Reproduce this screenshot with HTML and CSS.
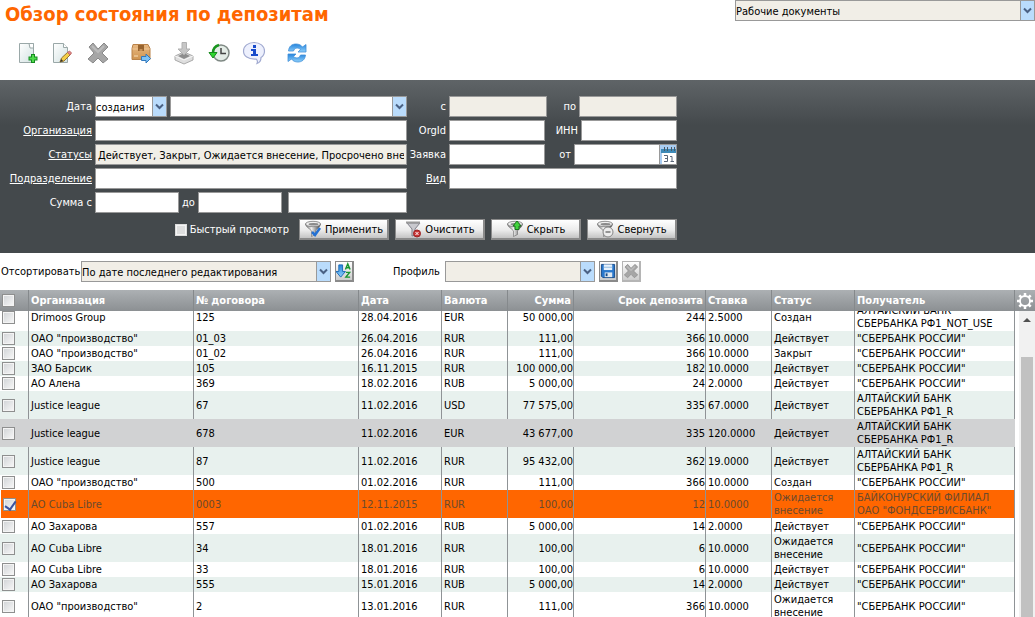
FILE: index.html
```
<!DOCTYPE html>
<html lang="ru">
<head>
<meta charset="utf-8">
<title>Обзор состояния по депозитам</title>
<link rel="stylesheet" href="styles.css">
</head>
<body>
<svg class="defs" aria-hidden="true">
  <defs>
    <linearGradient id="metal"><stop offset="0" stop-color="#777"/><stop offset=".4" stop-color="#eee"/><stop offset="1" stop-color="#3c3c3c"/></linearGradient>
    <linearGradient id="paper" x2="1" y2="1"><stop offset="0" stop-color="#fff"/><stop offset="1" stop-color="#d3e2e2"/></linearGradient>
    <linearGradient id="box" x2="0" y2="1"><stop offset="0" stop-color="#e8b983"/><stop offset="1" stop-color="#cf9450"/></linearGradient>
    <linearGradient id="sky" x2="0" y2="1"><stop offset="0" stop-color="#2584dd"/><stop offset="1" stop-color="#8ed0fa"/></linearGradient>
    <symbol id="chevron" viewBox="0 0 9 6"><path d="M1 1l3.500 3.500L8 1" fill="none" stroke="#4a6184" stroke-width="2"/></symbol>
    <symbol id="cross" viewBox="0 0 24 24"><path d="M3 6l4-4 5 6 6-6 4 4-6 6 6 6-5 4-5-5-5 5-5-4 6-6z" fill="#a6a6a6" stroke="#8a8a8a" stroke-linejoin="round"/><path d="M6 5l6 6 6-6" fill="none" stroke="#bcbcbc" stroke-width="2"/></symbol>
    <symbol id="funnel" viewBox="0 0 18 18"><path d="M1.500 4c0 3 5 5 6 7v5.500l4-2V11c1-2 5-4 5-7z" fill="url(#metal)" stroke="#666" stroke-width=".6"/><ellipse cx="9" cy="4" rx="7.500" ry="2.700" fill="#eee" stroke="#777" stroke-width=".8"/><ellipse cx="9.500" cy="4.300" rx="5" ry="1.300" fill="#8a8a8a"/></symbol>
  </defs>
</svg>

<header class="top">
  <h1>Обзор состояния по депозитам</h1>
  <span class="select shaded docs"><select aria-label="Документы"><option>Рабочие документы</option></select><svg><use href="#chevron"/></svg></span>
</header>

<nav class="toolbar" aria-label="Действия">
  <div class="group">
    <button aria-label="Создать"><svg viewBox="0 0 24 24"><path d="M3.500 2.500h14v19h-14z" fill="url(#paper)" stroke="#9aa8a8"/><path d="M13 2.500h4.500V7H14z" fill="#fff" stroke="#9aa8a8"/><path d="M17 13v9M12.500 17.500h9" stroke="#148b20" stroke-width="4"/><path d="M17 14v7M13.500 17.500h7" stroke="#4fdb4b" stroke-width="2"/></svg></button>
    <button aria-label="Изменить"><svg viewBox="0 0 24 24"><path d="M2.500 2.500h10l4 4v15h-14z" fill="url(#paper)" stroke="#9aa8a8"/><path d="M12.500 2.500v4h4" fill="#fff" stroke="#9aa8a8"/><path d="M9 21l1.500-4L17 11l2.500 2.500L13 20z" fill="#f4cf47" stroke="#96742d"/><path d="M16.500 11.500l2-1.500 2 2-1.500 2z" fill="#e08a86" stroke="#c06a6a"/><path d="M9 21l1.500-3 1.500 2z" fill="#333"/></svg></button>
    <button aria-label="Удалить"><svg><use href="#cross"/></svg></button>
  </div>
  <div class="group">
    <button aria-label="Отправить"><svg viewBox="0 0 24 24"><path d="M4 3.500h15l2 4v11H3v-11z" fill="url(#box)" stroke="#b98249"/><path d="M3.500 8h17" stroke="#f0c796"/><path d="M9 4h6v6H9z" fill="#98642f"/><path d="M10.500 10V8h3v2" fill="#c99359"/><path d="M5 15h4" stroke="#fae1bb"/><path d="M12.500 15.500H17V13l4.500 4.500L17 22v-2.500h-4.500z" fill="#7fc2f4" stroke="#3179be"/></svg></button>
  </div>
  <div class="group">
    <button aria-label="Импорт"><svg viewBox="0 0 24 24"><path d="M3 15l9-4 9 4v4l-9 4-9-4z" fill="#dedede" stroke="#aaa"/><path d="M3 15l9 4 9-4" fill="none" stroke="#f6f6f6"/><path d="M6 15l6-3 6 3-6 3z" fill="#8d8d8d"/><path d="M10 1.500h4.500V8H18l-6 6-6-6h4z" fill="#c6c6c6" stroke="#b0b0b0"/></svg></button>
    <button aria-label="История"><svg viewBox="0 0 24 24"><circle cx="14" cy="12" r="8" fill="#e3ece6" stroke="#7f8984" stroke-width="1.500"/><path d="M14 7v5.500h5" fill="none" stroke="#444" stroke-width="1.500"/><path d="M12 4C8 5 6 7 6 12" fill="none" stroke="#18951e" stroke-width="2.500"/><path d="M2 11.500h8L6 17z" fill="#2ed52e" stroke="#178a1c"/></svg></button>
    <button aria-label="Информация"><svg viewBox="0 0 24 24"><path d="M12 1.500c6 0 10.500 3.500 10.500 8.500 0 3-1 5-3.500 6.500 0 3-1 5-4 6 1-2 0-4-1-4.500C6 18.500 1.500 15 1.500 10S6 1.500 12 1.500z" fill="#edf0fd" stroke="#a0a9d0" stroke-width="1.200"/><path d="M11 4h3v3h-3zM9 8h5v5h2v2H9v-2h2v-3H9z" fill="#174acb"/></svg></button>
  </div>
  <div class="group">
    <button aria-label="Обновить"><svg viewBox="0 0 24 24"><path d="M3.500 10C4 5 7 3 11 3c3 0 5 1 6.500 3L21 3.500V11h-8l2.500-2.500c-3-2.500-6-1.500-7 1.500z" fill="url(#sky)" stroke="#4391d8" stroke-width=".8"/><path d="M20.500 14c-.5 5-4 7-7.500 7-3 0-5-1-6.500-3L3 20.500V13h8l-2.500 2.500c3 2.500 6 1.500 7-1.500z" fill="url(#sky)" stroke="#4391d8" stroke-width=".8"/></svg></button>
  </div>
</nav>

<form class="filter" onsubmit="return false">
  <div class="filter-body">
  <div class="fields">
    <label for="kind">Дата</label>
    <div class="line">
      <span class="select kind"><select id="kind"><option>создания</option></select><svg><use href="#chevron"/></svg></span>
      <span class="select grow"><select aria-label="Период"><option></option></select><svg><use href="#chevron"/></svg></span>
    </div>
    <label for="from">с</label>
    <div class="line spread"><input id="from" class="date" disabled><span class="pair"><label for="to">по</label><input id="to" class="date" disabled></span></div>

    <label for="org" class="link">Организация</label>
    <input id="org">
    <label for="orgid">OrgId</label>
    <div class="line spread"><input id="orgid" class="code"><span class="pair"><label for="inn">ИНН</label><input id="inn" class="code"></span></div>

    <label for="status" class="link">Статусы</label>
    <input id="status" class="shaded" readonly value="Действует, Закрыт, Ожидается внесение, Просрочено внесение">
    <label for="req">Заявка</label>
    <div class="line spread"><input id="req" class="code"><span class="pair"><label for="reqdate">от</label><span class="line picker"><input id="reqdate"><button type="button" aria-label="Календарь"><svg viewBox="0 0 16 19"><path d="M1 4h15v4H1z" fill="#3d8ab8"/><path d="M4.500 2v4M7.500 2v4M11.500 2v4M14.500 2v4" stroke="#4b5964"/><path d="M2 8h14v11H2z" fill="#fff"/><path d="M4 10.500h3.500v6H4M5 13.500h2.500M10 11.500h2v5M10.500 16.500h3.500" fill="none" stroke="#5b6779"/></svg></button></span></span></div>

    <label for="unit" class="link">Подразделение</label>
    <input id="unit">
    <label for="type" class="link">Вид</label>
    <input id="type">

    <label for="sum1">Сумма с</label>
    <div class="line"><input id="sum1" class="sum"><label for="sum2">до</label><input id="sum2" class="sum"><input class="grow currency" aria-label="Валюта"></div>
  </div>
  <div class="actions">
    <label class="quick"><input type="checkbox">Быстрый просмотр</label>
    <button type="button" class="btn"><svg viewBox="0 0 18 18"><use href="#funnel"/><path d="M8 12l3 3 5-7" fill="none" stroke="#2371d4" stroke-width="2.500"/></svg>Применить</button>
    <button type="button" class="btn"><svg viewBox="0 0 18 18"><path d="M3 3l5 6v7l3-1V9l5-6z" fill="#c9c9ce" stroke="#81818b"/><path d="M2 2.500h14" stroke="#999" stroke-width="2"/><circle cx="13" cy="13.500" r="3.500" fill="#c93535" stroke="#9b2323"/><path d="M11.500 12l3 3m0-3l-3 3" stroke="#fff"/></svg>Очистить</button>
    <button type="button" class="btn"><svg viewBox="0 0 18 18"><use href="#funnel"/><path d="M9 9.500V6H7l4-5 4 5h-2v3.500z" fill="#42d33d" stroke="#17731b"/></svg>Скрыть</button>
    <button type="button" class="btn"><svg viewBox="0 0 18 18"><use href="#funnel"/><circle cx="12" cy="12" r="5" fill="#ececec" stroke="#858585"/><path d="M9.500 12h5" stroke="#777" stroke-width="1.500"/></svg>Свернуть</button>
  </div>
  </div>
</form>

<div class="sorting">
  <label for="sort" class="sort-label">Отсортировать</label>
  <span class="select shaded sort"><select id="sort"><option>По дате последнего редактирования</option></select><svg><use href="#chevron"/></svg></span>
  <button class="square" aria-label="Направление сортировки"><svg viewBox="0 0 17 19"><path d="M3 3h4v7h3l-5 6-5-6h3z" fill="url(#sky)" stroke="#1769b9"/><path d="M10 8l2.500-6L15 8M11 6h3M10.500 11h4l-4 5h4.500" fill="none" stroke="#16952f" stroke-width="1.500"/></svg></button>
  <label for="profile" class="profile-label">Профиль</label>
  <span class="select shaded profile"><select id="profile"><option></option></select><svg><use href="#chevron"/></svg></span>
  <button class="square" aria-label="Сохранить профиль"><svg viewBox="0 0 17 19"><path d="M1.500 2.500h14v14H3l-1.500-1.500z" fill="#2a78cc" stroke="#164b8a"/><path d="M4 2.500h9v6H4z" fill="#e8f2fc"/><path d="M4 5.500h9" stroke="#8eb9de"/><path d="M5 11h8v5H5z" fill="#e0e8f0"/><path d="M6 12h2v3H6z" fill="#174c89"/></svg></button>
  <button class="square muted" aria-label="Удалить профиль"><svg><use href="#cross"/></svg></button>
</div>

<main class="grid">
  <div class="grid-head">
    <table>
      <colgroup><col class="w-check"><col class="w-wide"><col class="w-wide"><col class="w-mid"><col class="w-small"><col class="w-small"><col class="w-term"><col class="w-small"><col class="w-mid"><col></colgroup>
      <thead><tr><th><input type="checkbox" aria-label="Выбрать все"></th><th>Организация</th><th>№ договора</th><th>Дата</th><th>Валюта</th><th class="num">Сумма</th><th class="num">Срок депозита</th><th>Ставка</th><th>Статус</th><th>Получатель</th></tr></thead>
    </table>
    <button class="gear" aria-label="Настройки"><svg viewBox="0 0 20 20"><g stroke="#fff" fill="none"><circle cx="10" cy="10" r="5" stroke-width="1.800"/><path d="M10 5V2M10 15v3M5 10H2M15 10h3M6.500 6.500L4.300 4.300M13.500 6.500l2.200-2.200M6.500 13.500l-2.200 2.200M13.500 13.500l2.200 2.200" stroke-width="2.500"/></g></svg></button>
  </div>
  <div class="grid-body">
    <div class="rows">
    <table aria-label="Депозиты">
      <colgroup><col class="w-check"><col class="w-wide"><col class="w-wide"><col class="w-mid"><col class="w-small"><col class="w-small"><col class="w-term"><col class="w-small"><col class="w-mid"><col></colgroup>
      <tbody>
        <tr><td><input type="checkbox" aria-label="125"></td><td>Drimoos Group</td><td>125</td><td>28.04.2016</td><td>EUR</td><td class="num">50 000,00</td><td class="num">244</td><td>2.5000</td><td>Создан</td><td>АЛТАЙСКИЙ БАНК<br>СБЕРБАНКА РФ1_NOT_USE</td></tr>
        <tr><td><input type="checkbox" aria-label="01_03"></td><td>ОАО "производство"</td><td>01_03</td><td>26.04.2016</td><td>RUR</td><td class="num">111,00</td><td class="num">366</td><td>10.0000</td><td>Действует</td><td>"СБЕРБАНК РОССИИ"</td></tr>
        <tr><td><input type="checkbox" aria-label="01_02"></td><td>ОАО "производство"</td><td>01_02</td><td>26.04.2016</td><td>RUR</td><td class="num">111,00</td><td class="num">366</td><td>10.0000</td><td>Закрыт</td><td>"СБЕРБАНК РОССИИ"</td></tr>
        <tr><td><input type="checkbox" aria-label="105"></td><td>ЗАО Барсик</td><td>105</td><td>16.11.2015</td><td>RUR</td><td class="num">100 000,00</td><td class="num">182</td><td>10.0000</td><td>Действует</td><td>"СБЕРБАНК РОССИИ"</td></tr>
        <tr><td><input type="checkbox" aria-label="369"></td><td>АО Алена</td><td>369</td><td>18.02.2016</td><td>RUB</td><td class="num">5 000,00</td><td class="num">24</td><td>2.0000</td><td>Действует</td><td>"СБЕРБАНК РОССИИ"</td></tr>
        <tr><td><input type="checkbox" aria-label="67"></td><td>Justice league</td><td>67</td><td>11.02.2016</td><td>USD</td><td class="num">77 575,00</td><td class="num">335</td><td>67.0000</td><td>Действует</td><td>АЛТАЙСКИЙ БАНК<br>СБЕРБАНКА РФ1_R</td></tr>
        <tr class="hovered"><td><input type="checkbox" aria-label="678"></td><td>Justice league</td><td>678</td><td>11.02.2016</td><td>EUR</td><td class="num">43 677,00</td><td class="num">335</td><td>120.0000</td><td>Действует</td><td>АЛТАЙСКИЙ БАНК<br>СБЕРБАНКА РФ1_R</td></tr>
        <tr><td><input type="checkbox" aria-label="87"></td><td>Justice league</td><td>87</td><td>11.02.2016</td><td>RUR</td><td class="num">95 432,00</td><td class="num">362</td><td>19.0000</td><td>Действует</td><td>АЛТАЙСКИЙ БАНК<br>СБЕРБАНКА РФ1_R</td></tr>
        <tr><td><input type="checkbox" aria-label="500"></td><td>ОАО "производство"</td><td>500</td><td>01.02.2016</td><td>RUR</td><td class="num">111,00</td><td class="num">366</td><td>10.0000</td><td>Создан</td><td>"СБЕРБАНК РОССИИ"</td></tr>
        <tr class="selected"><td><input type="checkbox" checked aria-label="0003"></td><td>АО Cuba Libre</td><td>0003</td><td>12.11.2015</td><td>RUR</td><td class="num">100,00</td><td class="num">12</td><td>10.0000</td><td>Ожидается<br>внесение</td><td>БАЙКОНУРСКИЙ ФИЛИАЛ<br>ОАО "ФОНДСЕРВИСБАНК"</td></tr>
        <tr><td><input type="checkbox" aria-label="557"></td><td>АО Захарова</td><td>557</td><td>01.02.2016</td><td>RUB</td><td class="num">5 000,00</td><td class="num">14</td><td>2.0000</td><td>Действует</td><td>"СБЕРБАНК РОССИИ"</td></tr>
        <tr><td><input type="checkbox" aria-label="34"></td><td>АО Cuba Libre</td><td>34</td><td>18.01.2016</td><td>RUR</td><td class="num">100,00</td><td class="num">6</td><td>10.0000</td><td>Ожидается<br>внесение</td><td>"СБЕРБАНК РОССИИ"</td></tr>
        <tr><td><input type="checkbox" aria-label="33"></td><td>АО Cuba Libre</td><td>33</td><td>18.01.2016</td><td>RUR</td><td class="num">100,00</td><td class="num">6</td><td>10.0000</td><td>Действует</td><td>"СБЕРБАНК РОССИИ"</td></tr>
        <tr><td><input type="checkbox" aria-label="555"></td><td>АО Захарова</td><td>555</td><td>15.01.2016</td><td>RUB</td><td class="num">5 000,00</td><td class="num">14</td><td>2.0000</td><td>Действует</td><td>"СБЕРБАНК РОССИИ"</td></tr>
        <tr><td><input type="checkbox" aria-label="2"></td><td>ОАО "производство"</td><td>2</td><td>13.01.2016</td><td>RUR</td><td class="num">111,00</td><td class="num">366</td><td>10.0000</td><td>Ожидается<br>внесение</td><td>"СБЕРБАНК РОССИИ"</td></tr>
      </tbody>
    </table>
    </div>
    <div class="scrollbar" aria-hidden="true"><svg viewBox="0 0 8 4"><path d="M0 4l4-4 4 4z" fill="#505050"/></svg><div class="thumb"></div></div>
  </div>
</main>
</body>
</html>
```
FILE: styles.css
```
* { box-sizing: border-box; }
body {
  margin: 0;
  height: 100vh;
  display: flex;
  flex-direction: column;
  overflow: hidden;
  background: #fff;
  color: #000;
  font: 11px/13px Tahoma, "DejaVu Sans Condensed", "Noto Sans", sans-serif;
}
button, input, select { font: inherit; color: inherit; margin: 0; border-radius: 0; }
button { padding: 0; border: 0; background: none; }
svg { display: block; }
.defs { position: absolute; width: 0; height: 0; }

/* Header */
.top { display: flex; justify-content: space-between; align-items: flex-start; height: 40px; padding-left: 5px; }
h1 { margin: 0; padding-top: 2px; font-size: 20px; line-height: 24px; color: #f60; white-space: nowrap; }
.docs { width: 300px; }

/* Text boxes and drop-downs */
input:not([type="checkbox"]) { display: block; width: 100%; min-width: 0; height: 21px; padding: 1px 2px 0; border: 1px solid #999; background: #fff; color: #000; }
input.shaded, input:disabled, .shaded select { background: #f1eee7 !important; }
.select { position: relative; display: block; }
.select select { display: block; width: 100%; height: 21px; padding: 1px 16px 0 0; border: 1px solid #999; background: #fff; color: #000; appearance: none; }
.select svg { position: absolute; top: 1px; right: 1px; width: 14px; height: 19px; padding: 6px 2px; border-left: 1px solid #999; background: #badcfc; pointer-events: none; }

/* Toolbar */
.toolbar { display: flex; gap: 19px; padding: 1px 16px 15px; }
.group { display: flex; gap: 11px; }
.toolbar button, .toolbar svg { width: 24px; height: 24px; }

/* Filter */
.filter { height: 173px; flex: none; padding-top: 16px; background: linear-gradient(#5f6467, #44494c 45px); color: #fff; }
.filter-body { width: max-content; }
.fields { display: grid; grid-template-columns: 92px 312px 36px 228px; gap: 3px; align-items: center; }
.fields > label { display: flex; justify-content: flex-end; white-space: nowrap; }
.fields > .link { text-decoration: underline; }
.line { display: flex; align-items: center; gap: 3px; }
.spread { justify-content: space-between; }
.pair { display: flex; align-items: center; gap: 3px; }
.grow { flex: 1; }
.kind { width: 72px; }
.fields .date { width: 98px; }
.fields .code { width: 96px; }
.fields .sum { width: 84px; flex: none; }
.line .currency { margin-left: 3px; }
.line.picker { gap: 0; width: 103px; }
.picker button { flex: none; width: 17px; height: 21px; border: 1px solid #999; border-left: 0; background: #a9cdf2; }
.picker svg { width: 16px; height: 19px; }
.actions { display: flex; justify-content: flex-end; gap: 6px; margin-top: 6px; }
.quick { display: flex; align-items: center; gap: 3px; margin-right: 4px; }
.btn { display: flex; align-items: center; justify-content: center; gap: 3px; width: 90px; height: 21px; border: 1px solid #8a8a8a; border-bottom-width: 2px; border-right-width: 2px; background: linear-gradient(#fff, #ececec 55%, #c4c4c4); color: #000; }
.btn svg { width: 18px; height: 18px; }

/* Tick boxes */
input[type="checkbox"] { appearance: none; display: block; flex: none; width: 13px; height: 13px; border: 1px solid #8e8f8f; background: linear-gradient(135deg, #d0d3d6, #f8f8f8); box-shadow: inset 0 0 0 1px #f4f4f4; }
.quick input[type="checkbox"] { width: 12px; height: 12px; border-color: #ddd; background: #dedede; }
input[type="checkbox"]:checked::after { content: ""; display: block; width: 5px; height: 9px; margin-left: 3px; border: solid #3c53a0; border-width: 0 2px 2px 0; transform: rotate(35deg); }

/* Sorting bar */
.sorting { display: flex; align-items: center; flex: none; height: 37px; padding-left: 1px; }
.sort-label { width: 80px; }
.sort { width: 250px; margin-right: 4px; }
.profile-label { width: 51px; margin-left: 35px; margin-right: 1px; }
.profile { width: 150px; margin-right: 4px; }
.square { width: 19px; height: 21px; margin-right: 4px; border: 1px solid #8a8a8a; border-bottom-width: 2px; border-right-width: 2px; background: linear-gradient(#fff, #ccc); }
.square svg { width: 16px; height: 18px; }
.square.muted { border-color: #b5b5b5; }

/* Grid */
.grid { flex: 1; min-height: 0; display: flex; flex-direction: column; }
.grid-head { display: flex; flex: none; background: linear-gradient(#acb0b3, #8c9093); color: #fff; }
table { flex: 1; width: 100%; table-layout: fixed; border-collapse: separate; border-spacing: 0; }
.w-check { width: 29px; }
.w-wide { width: 165px; }
.w-mid { width: 83px; }
.w-small { width: 66px; }
.w-term { width: 132px; }
th, td { padding: 1px 0 1px 2px; border-right: 1px solid #8f9396; text-align: left; white-space: nowrap; }
th { height: 21px; padding-right: 2px; border-color: #85898c; }
th.num, td.num { text-align: right; }
td.num { padding-right: 0; }
td { height: 15px; vertical-align: middle; }
tr:nth-child(even) td { background: #e8f1ee; }
tr.hovered td { background: #d1d2d3; border-color: #d1d2d3; }
tr.selected td { background: #f60; color: #6b4a2e; }
tr.selected td:first-child { border-left: 1px solid #fff; }
tr:nth-child(11) td { height: 16px; }
.gear { width: 20px; height: 21px; }
.gear svg { width: 20px; height: 20px; }
.grid-body { flex: 1; min-height: 0; display: flex; overflow: hidden; }
.rows { flex: 1; }
.rows table { margin-top: -8px; }
.scrollbar { width: 16px; margin-left: 4px; padding-top: 7px; background: #f1f1f1; }
.scrollbar svg { width: 8px; height: 4px; margin: 0 auto; }
.thumb { height: 100%; margin: 35px 2px 0; background: #c1c1c1; }
```
